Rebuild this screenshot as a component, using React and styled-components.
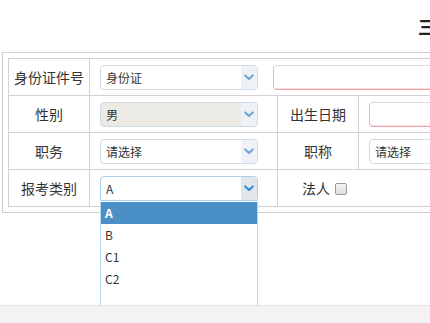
import React from "react";
import styled, { createGlobalStyle } from "styled-components";

const GlobalStyle = createGlobalStyle`
  html, body {
    margin: 0;
    padding: 0;
    background: #fff;
    overflow: hidden;
  }
  body {
    font-family: "Noto Sans CJK SC", "Noto Sans", sans-serif;
    color: #333;
  }
`;

const options = ["A", "B", "C1", "C2"];

export default function App() {
  return (
    <Page>
      <GlobalStyle />
      <Title>三类人员报名信息登记表</Title>
      <Panel>
        <FormTable>
          <colgroup>
            <col style={{ width: 81 }} />
            <col style={{ width: 188 }} />
            <col style={{ width: 81 }} />
            <col style={{ width: 188 }} />
          </colgroup>
          <tbody>
            <tr>
              <Label>身份证件号</Label>
              <Field colSpan={3}>
                <Inline>
                  <Select value="身份证" />
                  <TextInput $wide />
                </Inline>
              </Field>
            </tr>
            <tr>
              <Label>性别</Label>
              <Field>
                <Select value="男" disabled />
              </Field>
              <Label>出生日期</Label>
              <Field>
                <TextInput />
              </Field>
            </tr>
            <tr>
              <Label>职务</Label>
              <Field>
                <Select value="请选择" />
              </Field>
              <Label>职称</Label>
              <Field>
                <Select value="请选择" />
              </Field>
            </tr>
            <tr>
              <Label>报考类别</Label>
              <Field>
                <Select value="A" open />
              </Field>
              <CheckCell colSpan={2}>
                法人
                <Check />
              </CheckCell>
            </tr>
          </tbody>
        </FormTable>
      </Panel>
      <Footer />
    </Page>
  );
}

function Select({ value, disabled, open }) {
  return (
    <SelectBox $disabled={disabled} $open={open}>
      <SelectText>{value}</SelectText>
      <Arrow $open={open}>
        <svg width="10" height="7" viewBox="0 0 10 7">
          <path
            d="M1.2 1.4 L5 5 L8.8 1.4"
            fill="none"
            stroke={open ? "#2b8be0" : "#6fa3d2"}
            strokeWidth="2"
            strokeLinecap="round"
            strokeLinejoin="round"
          />
        </svg>
      </Arrow>
      {open && (
        <Dropdown>
          {options.map((o) => (
            <Option key={o} $active={o === value}>
              {o}
            </Option>
          ))}
        </Dropdown>
      )}
    </SelectBox>
  );
}

const Page = styled.div`
  width: 1000px;
  min-height: 323px;
`;

const Title = styled.h1`
  margin: 0;
  height: 52px;
  line-height: 52px;
  padding-left: 418px;
  font-size: 18px;
  font-weight: 700;
  color: #222;
  white-space: nowrap;
`;

const Panel = styled.div`
  margin-left: 2px;
  border: 1px solid #cfcfcf;
  padding: 5px;
  width: 560px;
`;

const FormTable = styled.table`
  border-collapse: collapse;
  table-layout: fixed;
  width: 538px;
`;

const Label = styled.td`
  height: 36px;
  border: 1px solid #d2d2d2;
  text-align: center;
  font-size: 14px;
  color: #333;
  padding: 0;
  white-space: nowrap;
`;

const Field = styled.td`
  height: 36px;
  border: 1px solid #d2d2d2;
  padding: 0 0 0 10px;
  vertical-align: middle;
`;

const CheckCell = styled.td`
  height: 36px;
  border: 1px solid #d2d2d2;
  padding: 0 0 0 24px;
  font-size: 14px;
  color: #333;
`;

const Inline = styled.div`
  display: flex;
  align-items: center;
  gap: 15px;
`;

const SelectBox = styled.div`
  position: relative;
  box-sizing: border-box;
  width: 158px;
  height: 25px;
  display: flex;
  align-items: center;
  border: 1px solid ${(p) => (p.$open ? "#a9d0ee" : "#cddbe7")};
  border-radius: ${(p) => (p.$open ? "4px 4px 0 0" : "4px")};
  background: ${(p) => (p.$disabled ? "#ebeae4" : "#fff")};
`;

const SelectText = styled.span`
  flex: 1;
  padding-left: 5px;
  font-size: 12px;
  color: #333;
`;

const Arrow = styled.span`
  width: 16px;
  height: 23px;
  display: flex;
  align-items: center;
  justify-content: center;
  background: ${(p) => (p.$open ? "#e3e6e9" : "#eef2f6")};
  border-radius: 0 3px 3px 0;
`;

const Dropdown = styled.div`
  position: absolute;
  left: -1px;
  right: -1px;
  top: 25px;
  height: 120px;
  box-sizing: border-box;
  background: #fff;
  border: 1px solid #b7d7ef;
  border-top: none;
  z-index: 5;
`;

const Option = styled.div`
  height: 22px;
  line-height: 22px;
  padding-left: 4px;
  font-size: 12px;
  font-weight: ${(p) => (p.$active ? 700 : 400)};
  color: ${(p) => (p.$active ? "#fff" : "#333")};
  background: ${(p) => (p.$active ? "#4b8fc7" : "transparent")};
`;

const TextInput = styled.div`
  box-sizing: border-box;
  height: 25px;
  width: ${(p) => (p.$wide ? "260px" : "170px")};
  border: 1px solid #dcdcdc;
  border-left-color: #e9b9bf;
  border-bottom-color: #ee9ea8;
  border-radius: 4px;
  box-shadow: inset 0 -1px 0 #fbe3e6;
  background: #fff;
`;

const Check = styled.span`
  display: inline-block;
  vertical-align: -1px;
  box-sizing: border-box;
  width: 12px;
  height: 12px;
  margin-left: 5px;
  border: 1px solid #9a9a9a;
  border-radius: 2px;
  background: linear-gradient(#f4f4f4, #dedede);
`;

const Footer = styled.div`
  position: fixed;
  left: 0;
  right: 0;
  bottom: 0;
  height: 17px;
  background: #f3f3f3;
  border-top: 1px solid #e4e4e4;
  z-index: 10;
`;
